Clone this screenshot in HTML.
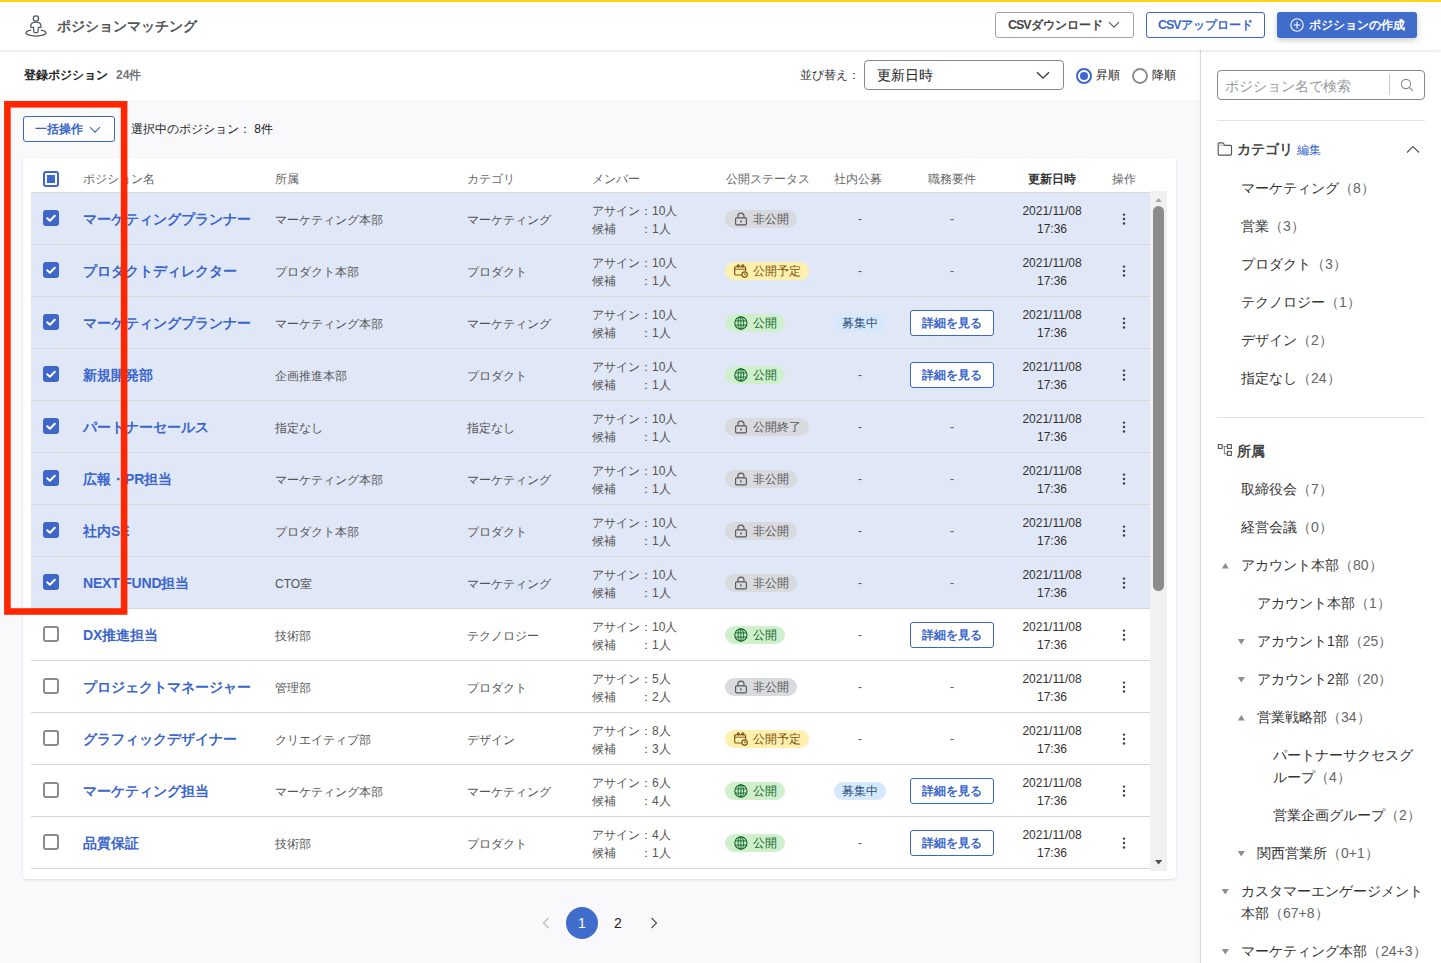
<!DOCTYPE html>
<html lang="ja"><head><meta charset="utf-8"><title>ポジションマッチング</title>
<style>
*{box-sizing:border-box;margin:0;padding:0}
html,body{width:1441px;height:963px;overflow:hidden}
body{font-family:"Liberation Sans",sans-serif;background:#f9f9fb;color:#333;position:relative;font-size:12px}
.abs{position:absolute}
i{font-style:normal}
#ybar{left:0;top:0;width:1441px;height:2px;background:#ffd816}
#hdr{left:0;top:2px;width:1441px;height:48px;background:#fff;box-shadow:0 1px 3px rgba(0,0,0,.13);z-index:5}
#title,.btn,#logo{z-index:6}
.lt{font-size:1.04em;letter-spacing:-.085em;margin-right:.04em}
#title{left:57px;top:15px;font-size:14px;font-weight:bold;color:#555;line-height:22px;white-space:nowrap}
.btn{position:absolute;height:26px;top:12px;border-radius:3px;font-size:12px;font-weight:bold;line-height:24px;text-align:center;white-space:nowrap}
#sub{left:0;top:50px;width:1200px;height:50px;background:#fff}
#side{left:1200px;top:50px;width:241px;height:913px;background:#fff;border-left:1px solid #d9dade;box-shadow:-3px 0 5px rgba(0,0,0,.025)}
#card{left:23px;top:157.500px;width:1153px;height:721px;background:#fff;border-radius:4px;box-shadow:0 1px 3px rgba(0,0,0,.13)}
.th{position:absolute;top:171px;font-size:12px;line-height:17px;color:#666;white-space:nowrap}
#rows{left:31px;top:192px;width:1119px;height:677px}
.row{position:absolute;left:0;width:1119px;height:53px;border-top:1px solid #d6d6d6;border-bottom:1px solid #d6d6d6}
.row.sel{background:#e0e7f7}
.cb{position:absolute;left:12px;top:17px;width:16px;height:16px;border:2px solid #8b8b91;border-radius:3px;background:#fff}
.cb.on{background:#3e67c9;border-color:#3e67c9}
.cb svg{position:absolute;left:-2px;top:-2px;width:16px;height:16px}
.nm{position:absolute;left:52px;top:15px;font-size:14px;line-height:22px;font-weight:bold;color:#3a66cc;white-space:nowrap}
.c{position:absolute;top:18px;font-size:12px;line-height:18px;color:#555;white-space:nowrap}
.c2{left:244px}.c3{left:436px}
.mem{position:absolute;left:561px;top:9px;font-size:12px;line-height:18px;color:#555;white-space:nowrap}
.mem span{display:block}
.mem i{display:inline-block;width:24px}
.bd{position:absolute;left:694px;top:17px;height:18px;border-radius:9px;font-size:12px;line-height:18px;padding:0 8px 0 28px;white-space:nowrap}
.bd .ic{position:absolute;left:9px;top:2px;width:14px;height:14px}
.b-gray{background:#d9dadd;color:#55585c}
.b-yel{background:#fff0ad;color:#7a5410}
.b-grn{background:#d0f0cd;color:#12692e}
.cc{position:absolute;top:0;height:51px;display:flex;align-items:center;justify-content:center;font-size:12px;color:#555}
.c6{left:788px;width:82px}.c7{left:870px;width:102px}
.rec{background:#d6e9fc;color:#2d4f7c;border-radius:9px;height:18px;line-height:18px;padding:0 8px}
.det{border:1px solid #3a66cc;color:#3a66cc;font-weight:bold;border-radius:3px;height:26px;line-height:24px;width:84px;text-align:center;background:#fff}
.dt{position:absolute;left:971px;width:100px;top:9px;text-align:center;font-size:12px;line-height:18px;color:#333}
.kb{position:absolute;left:1090px;top:19px;width:6px;height:14px;fill:#3c3c3c}


#b1{left:995px;width:139px;border:1px solid #a3a3a3;color:#444;background:#fff;text-align:left;padding-left:12px}
#b2{left:1146px;width:119px;border:1px solid #3a66cc;color:#3a66cc;background:#fff}
#b3{left:1277px;width:140px;background:#406ccb;color:#fff;line-height:26.500px;box-shadow:0 2px 6px rgba(0,0,0,.22);text-align:left;padding-left:32px}
#reg{left:24px;top:66px;font-size:12px;line-height:18px;font-weight:bold;color:#222;white-space:nowrap}
#reg span{font-weight:bold;color:#74747c;margin-left:8px}
#sortl{left:800px;top:66px;font-size:12px;line-height:18px;color:#333;white-space:nowrap}
#sel{left:864px;top:60px;width:200px;height:30px;border:1px solid #888;border-radius:4px;background:#fff;font-size:14px;line-height:28px;padding-left:12px;color:#222}
.rad{position:absolute;top:67.5px;width:16px;height:16px;border-radius:50%;border:1.800px solid #8a8a8a;background:#fff}
.rad.on{border-color:#3e67c9;border-width:2px}
.rad.on:after{content:"";position:absolute;left:2px;top:2px;width:8px;height:8px;border-radius:50%;background:#3e67c9}
.rl{position:absolute;top:66px;font-size:12px;line-height:18px;color:#222}
#bulk{left:23px;top:116px;width:92px;height:26px;border:1px solid #3a66cc;border-radius:3px;background:#fff;color:#3a66cc;font-weight:bold;font-size:12px;line-height:24px;padding-left:11px}
#selc{left:131px;top:120px;font-size:12px;line-height:18px;color:#222;white-space:nowrap}
#hcb{left:43px;top:171px;width:16px;height:16px;border:2px solid #3e67c9;border-radius:3px;background:#fff}
#hcb:after{content:"";position:absolute;left:2px;top:2px;width:8px;height:8px;background:#3e67c9}
#sb{left:1150px;top:191px;width:16.600px;height:680px;background:#f1f1f1}
#sbt{left:1153px;top:206px;width:11px;height:385px;background:#8c8c8c;border-radius:5.500px}
#redbox{left:4px;top:101px;width:123.5px;height:513.7px;border:6.600px solid #ff2600;z-index:9}
#pg1{left:566px;top:907px;width:32px;height:32px;border-radius:50%;background:#406ccb;color:#fff;font-size:14px;line-height:33px;text-align:center}
#pg2{left:602px;top:907px;width:32px;height:32px;color:#222;font-size:14px;line-height:33px;text-align:center}
#search{left:1217px;top:70px;width:208px;height:30px;border:1px solid #888;border-radius:4px;background:#fff;font-size:14px;line-height:30px;padding-left:7px;color:#999}
#search i{position:absolute;left:171px;top:3px;width:1px;height:21px;background:#ccc}
.hr{position:absolute;left:1217px;width:208px;height:1px;background:#e2e2e2}
.sh{position:absolute;font-size:14px;line-height:22px;font-weight:bold;color:#444;white-space:nowrap}
.sh a{font-size:12px;font-weight:normal;color:#3a66cc;margin-left:4px}
.si{position:absolute;font-size:14px;line-height:22px;color:#333;white-space:nowrap}
.si span{color:#666}
.tri{position:absolute;width:7px;height:5.500px;background:#8e8e8e;margin-left:.8px}
.tri.d{clip-path:polygon(0 0,100% 0,50% 100%)}
.tri.u{clip-path:polygon(50% 0,100% 100%,0 100%)}
</style></head><body>
<div class="abs" id="ybar"></div>
<div class="abs" id="hdr"></div>
<div class="abs" id="title">ポジションマッチング</div>
<div class="abs" id="sub"></div>
<div class="abs" id="side"></div>
<div class="abs" id="card"></div>
<div class="abs" id="rows">
<div class="row sel" style="top:0px"><span class="cb on"><svg viewBox="0 0 16 16"><path d="M4.2 8.2l2.7 2.6 4.9-5" fill="none" stroke="#fff" stroke-width="2" stroke-linecap="round" stroke-linejoin="round"/></svg></span><span class="nm">マーケティングプランナー</span><span class="c c2">マーケティング本部</span><span class="c c3">マーケティング</span><span class="mem"><span>アサイン：10人</span><span>候補<i></i>：1人</span></span><span class="bd b-gray"><svg class="ic" viewBox="0 0 14 14" fill="none" stroke="currentColor" stroke-width="1.15"><rect x="1.6" y="5.8" width="10.8" height="7" rx="1"/><path d="M3.9 5.8V4.1a3.05 3.05 0 0 1 6.1 0v1.700"/><path d="M6.950 8.300v2.200" stroke-width="1.300"/></svg>非公開</span><span class="cc c6"><span class="dash">-</span></span><span class="cc c7"><span class="dash">-</span></span><span class="dt">2021/11/08<br>17:36</span><svg class="kb" viewBox="0 0 6 14"><circle cx="3" cy="2.600" r="1.200"/><circle cx="3" cy="7.050" r="1.200"/><circle cx="3" cy="11.500" r="1.200"/></svg></div>
<div class="row sel" style="top:52px"><span class="cb on"><svg viewBox="0 0 16 16"><path d="M4.2 8.2l2.7 2.6 4.9-5" fill="none" stroke="#fff" stroke-width="2" stroke-linecap="round" stroke-linejoin="round"/></svg></span><span class="nm">プロダクトディレクター</span><span class="c c2">プロダクト本部</span><span class="c c3">プロダクト</span><span class="mem"><span>アサイン：10人</span><span>候補<i></i>：1人</span></span><span class="bd b-yel"><svg class="ic" viewBox="0 0 14 14" fill="none" stroke="currentColor" stroke-width="1.150"><path d="M7.600 11H1.700a1 1 0 0 1-1-1V3.700a1 1 0 0 1 1-1h8.900a1 1 0 0 1 1 1V7.300"/><circle cx="4.300" cy="1.900" r="1.100"/><circle cx="8.800" cy="1.900" r="1.100"/><path d="M0.700 5.200H11.600" stroke-width="0.900"/><circle cx="10.600" cy="10.600" r="2.700"/><path d="M10.600 9.200v1.500h1.200" stroke-width="0.900"/></svg>公開予定</span><span class="cc c6"><span class="dash">-</span></span><span class="cc c7"><span class="dash">-</span></span><span class="dt">2021/11/08<br>17:36</span><svg class="kb" viewBox="0 0 6 14"><circle cx="3" cy="2.600" r="1.200"/><circle cx="3" cy="7.050" r="1.200"/><circle cx="3" cy="11.500" r="1.200"/></svg></div>
<div class="row sel" style="top:104px"><span class="cb on"><svg viewBox="0 0 16 16"><path d="M4.2 8.2l2.7 2.6 4.9-5" fill="none" stroke="#fff" stroke-width="2" stroke-linecap="round" stroke-linejoin="round"/></svg></span><span class="nm">マーケティングプランナー</span><span class="c c2">マーケティング本部</span><span class="c c3">マーケティング</span><span class="mem"><span>アサイン：10人</span><span>候補<i></i>：1人</span></span><span class="bd b-grn"><svg class="ic" viewBox="0 0 14 14" fill="none" stroke="currentColor" stroke-width="1.150"><circle cx="6.900" cy="7" r="6.100"/><g stroke-width="0.950"><ellipse cx="6.900" cy="7" rx="2.800" ry="6.100"/><path d="M1.300 4.900h11.200M1.300 9.100h11.200M6.900 0.900v12.200"/></g></svg>公開</span><span class="cc c6"><span class="rec">募集中</span></span><span class="cc c7"><span class="det">詳細を見る</span></span><span class="dt">2021/11/08<br>17:36</span><svg class="kb" viewBox="0 0 6 14"><circle cx="3" cy="2.600" r="1.200"/><circle cx="3" cy="7.050" r="1.200"/><circle cx="3" cy="11.500" r="1.200"/></svg></div>
<div class="row sel" style="top:156px"><span class="cb on"><svg viewBox="0 0 16 16"><path d="M4.2 8.2l2.7 2.6 4.9-5" fill="none" stroke="#fff" stroke-width="2" stroke-linecap="round" stroke-linejoin="round"/></svg></span><span class="nm">新規開発部</span><span class="c c2">企画推進本部</span><span class="c c3">プロダクト</span><span class="mem"><span>アサイン：10人</span><span>候補<i></i>：1人</span></span><span class="bd b-grn"><svg class="ic" viewBox="0 0 14 14" fill="none" stroke="currentColor" stroke-width="1.150"><circle cx="6.900" cy="7" r="6.100"/><g stroke-width="0.950"><ellipse cx="6.900" cy="7" rx="2.800" ry="6.100"/><path d="M1.300 4.900h11.200M1.300 9.100h11.200M6.900 0.900v12.200"/></g></svg>公開</span><span class="cc c6"><span class="dash">-</span></span><span class="cc c7"><span class="det">詳細を見る</span></span><span class="dt">2021/11/08<br>17:36</span><svg class="kb" viewBox="0 0 6 14"><circle cx="3" cy="2.600" r="1.200"/><circle cx="3" cy="7.050" r="1.200"/><circle cx="3" cy="11.500" r="1.200"/></svg></div>
<div class="row sel" style="top:208px"><span class="cb on"><svg viewBox="0 0 16 16"><path d="M4.2 8.2l2.7 2.6 4.9-5" fill="none" stroke="#fff" stroke-width="2" stroke-linecap="round" stroke-linejoin="round"/></svg></span><span class="nm">パートナーセールス</span><span class="c c2">指定なし</span><span class="c c3">指定なし</span><span class="mem"><span>アサイン：10人</span><span>候補<i></i>：1人</span></span><span class="bd b-gray"><svg class="ic" viewBox="0 0 14 14" fill="none" stroke="currentColor" stroke-width="1.15"><rect x="1.6" y="5.8" width="10.8" height="7" rx="1"/><path d="M3.9 5.8V4.1a3.05 3.05 0 0 1 6.1 0v1.700"/><path d="M6.950 8.300v2.200" stroke-width="1.300"/></svg>公開終了</span><span class="cc c6"><span class="dash">-</span></span><span class="cc c7"><span class="dash">-</span></span><span class="dt">2021/11/08<br>17:36</span><svg class="kb" viewBox="0 0 6 14"><circle cx="3" cy="2.600" r="1.200"/><circle cx="3" cy="7.050" r="1.200"/><circle cx="3" cy="11.500" r="1.200"/></svg></div>
<div class="row sel" style="top:260px"><span class="cb on"><svg viewBox="0 0 16 16"><path d="M4.2 8.2l2.7 2.6 4.9-5" fill="none" stroke="#fff" stroke-width="2" stroke-linecap="round" stroke-linejoin="round"/></svg></span><span class="nm">広報・PR担当</span><span class="c c2">マーケティング本部</span><span class="c c3">マーケティング</span><span class="mem"><span>アサイン：10人</span><span>候補<i></i>：1人</span></span><span class="bd b-gray"><svg class="ic" viewBox="0 0 14 14" fill="none" stroke="currentColor" stroke-width="1.15"><rect x="1.6" y="5.8" width="10.8" height="7" rx="1"/><path d="M3.9 5.8V4.1a3.05 3.05 0 0 1 6.1 0v1.700"/><path d="M6.950 8.300v2.200" stroke-width="1.300"/></svg>非公開</span><span class="cc c6"><span class="dash">-</span></span><span class="cc c7"><span class="dash">-</span></span><span class="dt">2021/11/08<br>17:36</span><svg class="kb" viewBox="0 0 6 14"><circle cx="3" cy="2.600" r="1.200"/><circle cx="3" cy="7.050" r="1.200"/><circle cx="3" cy="11.500" r="1.200"/></svg></div>
<div class="row sel" style="top:312px"><span class="cb on"><svg viewBox="0 0 16 16"><path d="M4.2 8.2l2.7 2.6 4.9-5" fill="none" stroke="#fff" stroke-width="2" stroke-linecap="round" stroke-linejoin="round"/></svg></span><span class="nm">社内SE</span><span class="c c2">プロダクト本部</span><span class="c c3">プロダクト</span><span class="mem"><span>アサイン：10人</span><span>候補<i></i>：1人</span></span><span class="bd b-gray"><svg class="ic" viewBox="0 0 14 14" fill="none" stroke="currentColor" stroke-width="1.15"><rect x="1.6" y="5.8" width="10.8" height="7" rx="1"/><path d="M3.9 5.8V4.1a3.05 3.05 0 0 1 6.1 0v1.700"/><path d="M6.950 8.300v2.200" stroke-width="1.300"/></svg>非公開</span><span class="cc c6"><span class="dash">-</span></span><span class="cc c7"><span class="dash">-</span></span><span class="dt">2021/11/08<br>17:36</span><svg class="kb" viewBox="0 0 6 14"><circle cx="3" cy="2.600" r="1.200"/><circle cx="3" cy="7.050" r="1.200"/><circle cx="3" cy="11.500" r="1.200"/></svg></div>
<div class="row sel" style="top:364px"><span class="cb on"><svg viewBox="0 0 16 16"><path d="M4.2 8.2l2.7 2.6 4.9-5" fill="none" stroke="#fff" stroke-width="2" stroke-linecap="round" stroke-linejoin="round"/></svg></span><span class="nm"><span style=letter-spacing:-.2px>NEXT FUND</span>担当</span><span class="c c2">CTO室</span><span class="c c3">マーケティング</span><span class="mem"><span>アサイン：10人</span><span>候補<i></i>：1人</span></span><span class="bd b-gray"><svg class="ic" viewBox="0 0 14 14" fill="none" stroke="currentColor" stroke-width="1.15"><rect x="1.6" y="5.8" width="10.8" height="7" rx="1"/><path d="M3.9 5.8V4.1a3.05 3.05 0 0 1 6.1 0v1.700"/><path d="M6.950 8.300v2.200" stroke-width="1.300"/></svg>非公開</span><span class="cc c6"><span class="dash">-</span></span><span class="cc c7"><span class="dash">-</span></span><span class="dt">2021/11/08<br>17:36</span><svg class="kb" viewBox="0 0 6 14"><circle cx="3" cy="2.600" r="1.200"/><circle cx="3" cy="7.050" r="1.200"/><circle cx="3" cy="11.500" r="1.200"/></svg></div>
<div class="row" style="top:416px"><span class="cb"></span><span class="nm">DX推進担当</span><span class="c c2">技術部</span><span class="c c3">テクノロジー</span><span class="mem"><span>アサイン：10人</span><span>候補<i></i>：1人</span></span><span class="bd b-grn"><svg class="ic" viewBox="0 0 14 14" fill="none" stroke="currentColor" stroke-width="1.150"><circle cx="6.900" cy="7" r="6.100"/><g stroke-width="0.950"><ellipse cx="6.900" cy="7" rx="2.800" ry="6.100"/><path d="M1.300 4.900h11.200M1.300 9.100h11.200M6.900 0.900v12.200"/></g></svg>公開</span><span class="cc c6"><span class="dash">-</span></span><span class="cc c7"><span class="det">詳細を見る</span></span><span class="dt">2021/11/08<br>17:36</span><svg class="kb" viewBox="0 0 6 14"><circle cx="3" cy="2.600" r="1.200"/><circle cx="3" cy="7.050" r="1.200"/><circle cx="3" cy="11.500" r="1.200"/></svg></div>
<div class="row" style="top:468px"><span class="cb"></span><span class="nm">プロジェクトマネージャー</span><span class="c c2">管理部</span><span class="c c3">プロダクト</span><span class="mem"><span>アサイン：5人</span><span>候補<i></i>：2人</span></span><span class="bd b-gray"><svg class="ic" viewBox="0 0 14 14" fill="none" stroke="currentColor" stroke-width="1.15"><rect x="1.6" y="5.8" width="10.8" height="7" rx="1"/><path d="M3.9 5.8V4.1a3.05 3.05 0 0 1 6.1 0v1.700"/><path d="M6.950 8.300v2.200" stroke-width="1.300"/></svg>非公開</span><span class="cc c6"><span class="dash">-</span></span><span class="cc c7"><span class="dash">-</span></span><span class="dt">2021/11/08<br>17:36</span><svg class="kb" viewBox="0 0 6 14"><circle cx="3" cy="2.600" r="1.200"/><circle cx="3" cy="7.050" r="1.200"/><circle cx="3" cy="11.500" r="1.200"/></svg></div>
<div class="row" style="top:520px"><span class="cb"></span><span class="nm">グラフィックデザイナー</span><span class="c c2">クリエイティブ部</span><span class="c c3">デザイン</span><span class="mem"><span>アサイン：8人</span><span>候補<i></i>：3人</span></span><span class="bd b-yel"><svg class="ic" viewBox="0 0 14 14" fill="none" stroke="currentColor" stroke-width="1.150"><path d="M7.600 11H1.700a1 1 0 0 1-1-1V3.700a1 1 0 0 1 1-1h8.900a1 1 0 0 1 1 1V7.300"/><circle cx="4.300" cy="1.900" r="1.100"/><circle cx="8.800" cy="1.900" r="1.100"/><path d="M0.700 5.200H11.600" stroke-width="0.900"/><circle cx="10.600" cy="10.600" r="2.700"/><path d="M10.600 9.200v1.500h1.200" stroke-width="0.900"/></svg>公開予定</span><span class="cc c6"><span class="dash">-</span></span><span class="cc c7"><span class="dash">-</span></span><span class="dt">2021/11/08<br>17:36</span><svg class="kb" viewBox="0 0 6 14"><circle cx="3" cy="2.600" r="1.200"/><circle cx="3" cy="7.050" r="1.200"/><circle cx="3" cy="11.500" r="1.200"/></svg></div>
<div class="row" style="top:572px"><span class="cb"></span><span class="nm">マーケティング担当</span><span class="c c2">マーケティング本部</span><span class="c c3">マーケティング</span><span class="mem"><span>アサイン：6人</span><span>候補<i></i>：4人</span></span><span class="bd b-grn"><svg class="ic" viewBox="0 0 14 14" fill="none" stroke="currentColor" stroke-width="1.150"><circle cx="6.900" cy="7" r="6.100"/><g stroke-width="0.950"><ellipse cx="6.900" cy="7" rx="2.800" ry="6.100"/><path d="M1.300 4.900h11.200M1.300 9.100h11.200M6.900 0.900v12.200"/></g></svg>公開</span><span class="cc c6"><span class="rec">募集中</span></span><span class="cc c7"><span class="det">詳細を見る</span></span><span class="dt">2021/11/08<br>17:36</span><svg class="kb" viewBox="0 0 6 14"><circle cx="3" cy="2.600" r="1.200"/><circle cx="3" cy="7.050" r="1.200"/><circle cx="3" cy="11.500" r="1.200"/></svg></div>
<div class="row" style="top:624px"><span class="cb"></span><span class="nm">品質保証</span><span class="c c2">技術部</span><span class="c c3">プロダクト</span><span class="mem"><span>アサイン：4人</span><span>候補<i></i>：1人</span></span><span class="bd b-grn"><svg class="ic" viewBox="0 0 14 14" fill="none" stroke="currentColor" stroke-width="1.150"><circle cx="6.900" cy="7" r="6.100"/><g stroke-width="0.950"><ellipse cx="6.900" cy="7" rx="2.800" ry="6.100"/><path d="M1.300 4.900h11.200M1.300 9.100h11.200M6.900 0.900v12.200"/></g></svg>公開</span><span class="cc c6"><span class="dash">-</span></span><span class="cc c7"><span class="det">詳細を見る</span></span><span class="dt">2021/11/08<br>17:36</span><svg class="kb" viewBox="0 0 6 14"><circle cx="3" cy="2.600" r="1.200"/><circle cx="3" cy="7.050" r="1.200"/><circle cx="3" cy="11.500" r="1.200"/></svg></div>
</div>

<div class="btn" id="b1"><span class="lt">CSV</span>ダウンロード<svg class="abs" style="left:112px;top:8px" width="12" height="8" viewBox="0 0 12 8"><path d="M1 1.2l5 5 5-5" fill="none" stroke="#555" stroke-width="1.1"/></svg></div>
<div class="btn" id="b2"><span class="lt">CSV</span>アップロード</div>
<div class="btn" id="b3"><svg class="abs" style="left:13px;top:6.300px" width="14" height="14" viewBox="0 0 14 14"><circle cx="7" cy="7" r="6.2" fill="none" stroke="#fff" stroke-width="1.1"/><path d="M7 3.6v6.8M3.6 7h6.8" stroke="#fff" stroke-width="1.1"/></svg>ポジションの作成</div>
<svg class="abs" id="logo" style="left:0;top:0" width="80" height="50" viewBox="0 0 80 50" fill="none" stroke="#53575c" stroke-width="1.25" stroke-linejoin="round"><circle cx="35.9" cy="18.5" r="2.65"/><path d="M30.8 27.25V26C30.8 23.6 33 22 35.900 22S41 23.600 41 26V27.250H38.400L37.900 31.700Q37.800 32.700 36.800 32.700H35Q34 32.700 33.900 31.700L33.400 27.250Z"/><path d="M30.800 30.200A10 3.130 0 1 0 41.200 30.200" stroke-linecap="round"/></svg>
<div class="abs" id="reg">登録ポジション<span>24件</span></div>
<div class="abs" id="sortl">並び替え：</div>
<div class="abs" id="sel">更新日時<svg class="abs" style="left:171px;top:10px" width="14" height="9" viewBox="0 0 14 9"><path d="M1 1.200l6 6 6-6" fill="none" stroke="#333" stroke-width="1.3"/></svg></div>
<svg class="abs" style="left:1076px;top:67.5px" width="16" height="16" viewBox="0 0 16 16"><circle cx="8" cy="8" r="7" fill="#fff" stroke="#3e67c9" stroke-width="2"/><circle cx="8" cy="8" r="4" fill="#3e67c9"/></svg><div class="rl" style="left:1096px">昇順</div>
<svg class="abs" style="left:1131.5px;top:67.5px" width="16" height="16" viewBox="0 0 16 16"><circle cx="8" cy="8" r="7" fill="#fff" stroke="#8a8a8a" stroke-width="1.800"/></svg><div class="rl" style="left:1152px">降順</div>
<div class="abs" id="bulk">一括操作<svg class="abs" style="left:65px;top:9px" width="12" height="8" viewBox="0 0 12 8"><path d="M1 1.200l5 5 5-5" fill="none" stroke="#3a66cc" stroke-width="1.1"/></svg></div>
<div class="abs" id="selc">選択中のポジション： 8件</div>
<div class="abs" id="hcb"></div>
<div class="th" style="left:83px">ポジション名</div>
<div class="th" style="left:275px">所属</div>
<div class="th" style="left:467px">カテゴリ</div>
<div class="th" style="left:592px">メンバー</div>
<div class="th" style="left:726px">公開ステータス</div>
<div class="th" style="left:834px">社内公募</div>
<div class="th" style="left:928px">職務要件</div>
<div class="th" style="left:1028px;font-weight:bold;color:#333">更新日時</div>
<div class="th" style="left:1112px">操作</div>
<div class="abs" id="sb"></div><div class="abs" id="sbt"></div>
<svg class="abs" style="left:1154.800px;top:198px" width="7.200" height="4.400" viewBox="0 0 72 44"><path d="M0 44L36 0l36 44z" fill="#a8a8a8"/></svg>
<svg class="abs" style="left:1154.800px;top:860.200px" width="7.200" height="4.400" viewBox="0 0 72 44"><path d="M0 0L36 44l36-44z" fill="#505050"/></svg>
<svg class="abs" style="left:540.500px;top:917px" width="10" height="12" viewBox="0 0 10 12"><path d="M7.500 1L2.500 6l5 5" fill="none" stroke="#bbb" stroke-width="1.200"/></svg>
<div class="abs" id="pg1">1</div><div class="abs" id="pg2">2</div>
<svg class="abs" style="left:649px;top:917px" width="10" height="12" viewBox="0 0 10 12"><path d="M2.500 1l5 5-5 5" fill="none" stroke="#555" stroke-width="1.200"/></svg>
<div class="abs" id="search">ポジション名で検索<i></i><svg class="abs" style="left:181.500px;top:6.500px" width="14" height="14" viewBox="0 0 14 14"><circle cx="6" cy="6" r="4.600" fill="none" stroke="#888" stroke-width="1.100"/><path d="M9.400 9.400l3.400 3.400" stroke="#888" stroke-width="1.100"/></svg></div>
<div class="hr" style="top:120px"></div>
<svg class="abs" style="left:1217px;top:142px" width="16" height="14" viewBox="0 0 16 14" fill="none" stroke="#555" stroke-width="1.15"><path d="M1.2 12.1V1.8a1 1 0 0 1 1-1H5.500c.5 0 .9.300 1.100.700L7.500 3.300H13.500a1 1 0 0 1 1 1V12.100a1 1 0 0 1-1 1H2.200a1 1 0 0 1-1-1z"/><path d="M1.200 3.300H7.500" stroke="#999" stroke-width="0.800"/></svg>
<div class="sh" style="left:1237px;top:138px">カテゴリ<a>編集</a></div>
<svg class="abs" style="left:1406px;top:145px" width="14" height="9" viewBox="0 0 14 9"><path d="M1 7.500l6-6 6 6" fill="none" stroke="#555" stroke-width="1.100"/></svg>
<div class="si" style="left:1241px;top:177px">マーケティング<span>（8）</span></div>
<div class="si" style="left:1241px;top:215px">営業<span>（3）</span></div>
<div class="si" style="left:1241px;top:253px">プロダクト<span>（3）</span></div>
<div class="si" style="left:1241px;top:291px">テクノロジー<span>（1）</span></div>
<div class="si" style="left:1241px;top:329px">デザイン<span>（2）</span></div>
<div class="si" style="left:1241px;top:367px">指定なし<span>（24）</span></div>
<div class="hr" style="top:417px"></div>
<svg class="abs" style="left:1217px;top:443px" width="16" height="14" viewBox="0 0 16 14" fill="none" stroke="#555" stroke-width="1.100"><rect x="1.350" y="1.550" width="3.700" height="3.900"/><rect x="10.450" y="1.550" width="3.900" height="3.900"/><rect x="10.450" y="8.450" width="3.900" height="4"/><path d="M5.600 3.500H9.900M7.400 3.500V10.600H9.900" stroke="#888"/></svg>
<div class="sh" style="left:1237px;top:440px">所属</div>
<div class="si" style="left:1241px;top:478px">取締役会<span>（7）</span></div>
<div class="si" style="left:1241px;top:516px">経営会議<span>（0）</span></div>
<div class="tri u" style="left:1221px;top:563px"></div>
<div class="si" style="left:1241px;top:554px">アカウント本部<span>（80）</span></div>
<div class="si" style="left:1257px;top:592px">アカウント本部<span>（1）</span></div>
<div class="tri d" style="left:1237px;top:639px"></div>
<div class="si" style="left:1257px;top:630px">アカウント1部<span>（25）</span></div>
<div class="tri d" style="left:1237px;top:677px"></div>
<div class="si" style="left:1257px;top:668px">アカウント2部<span>（20）</span></div>
<div class="tri u" style="left:1237px;top:715px"></div>
<div class="si" style="left:1257px;top:706px">営業戦略部<span>（34）</span></div>
<div class="si" style="left:1273px;top:744px">パートナーサクセスグ<br>ループ<span>（4）</span></div>
<div class="si" style="left:1273px;top:804px">営業企画グループ<span>（2）</span></div>
<div class="tri d" style="left:1237px;top:851px"></div>
<div class="si" style="left:1257px;top:842px">関西営業所<span>（0+1）</span></div>
<div class="tri d" style="left:1221px;top:889px"></div>
<div class="si" style="left:1241px;top:880px">カスタマーエンゲージメント<br>本部<span>（67+8）</span></div>
<div class="tri d" style="left:1221px;top:949px"></div>
<div class="si" style="left:1241px;top:940px">マーケティング本部<span>（24+3）</span></div>
<svg class="abs" style="left:0;top:0;z-index:9" width="140" height="630" viewBox="0 0 140 630"><rect x="7.4" y="104.3" width="116.7" height="507.2" fill="none" stroke="#ff2600" stroke-width="6.6"/></svg>
</body></html>
